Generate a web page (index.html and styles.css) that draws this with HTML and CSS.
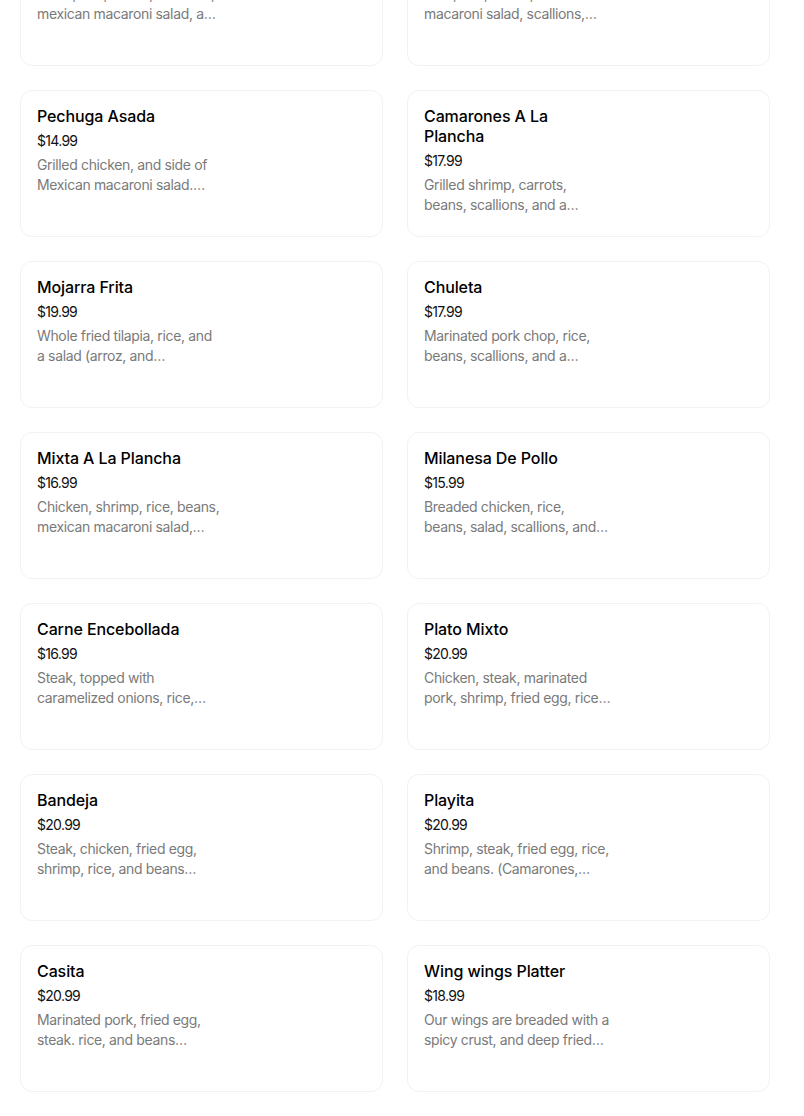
FILE: index.html
```html
<!DOCTYPE html>
<html lang="en">
<head>
<meta charset="utf-8">
<title>Menu</title>
<link rel="stylesheet" href="styles.css">
</head>
<body>
<div class="grid">
  <div class="card"><div class="info">
    <div class="title">Carne Asada</div>
    <div class="price">$16.99</div>
    <div class="desc">Steak, rice, beans, scallions,<br>mexican macaroni salad, a…</div>
  </div></div>
  <div class="card"><div class="info">
    <div class="title">Carnitas</div>
    <div class="price">$16.99</div>
    <div class="desc">Pork, rice, beans, mexican<br>macaroni salad, scallions,…</div>
  </div></div>

  <div class="card"><div class="info">
    <div class="title">Pechuga Asada</div>
    <div class="price">$14.99</div>
    <div class="desc">Grilled chicken, and side of<br>Mexican macaroni salad.…</div>
  </div></div>
  <div class="card"><div class="info">
    <div class="title">Camarones A La<br>Plancha</div>
    <div class="price">$17.99</div>
    <div class="desc">Grilled shrimp, carrots,<br>beans, scallions, and a…</div>
  </div></div>

  <div class="card"><div class="info">
    <div class="title">Mojarra Frita</div>
    <div class="price">$19.99</div>
    <div class="desc">Whole fried tilapia, rice, and<br>a salad (arroz, and…</div>
  </div></div>
  <div class="card"><div class="info">
    <div class="title">Chuleta</div>
    <div class="price">$17.99</div>
    <div class="desc">Marinated pork chop, rice,<br>beans, scallions, and a…</div>
  </div></div>

  <div class="card"><div class="info">
    <div class="title">Mixta A La Plancha</div>
    <div class="price">$16.99</div>
    <div class="desc">Chicken, shrimp, rice, beans,<br>mexican macaroni salad,…</div>
  </div></div>
  <div class="card"><div class="info">
    <div class="title">Milanesa De Pollo</div>
    <div class="price">$15.99</div>
    <div class="desc">Breaded chicken, rice,<br>beans, salad, scallions, and…</div>
  </div></div>

  <div class="card"><div class="info">
    <div class="title">Carne Encebollada</div>
    <div class="price">$16.99</div>
    <div class="desc">Steak, topped with<br>caramelized onions, rice,…</div>
  </div></div>
  <div class="card"><div class="info">
    <div class="title">Plato Mixto</div>
    <div class="price">$20.99</div>
    <div class="desc">Chicken, steak, marinated<br>pork, shrimp, fried egg, rice…</div>
  </div></div>

  <div class="card"><div class="info">
    <div class="title">Bandeja</div>
    <div class="price">$20.99</div>
    <div class="desc">Steak, chicken, fried egg,<br>shrimp, rice, and beans…</div>
  </div></div>
  <div class="card"><div class="info">
    <div class="title">Playita</div>
    <div class="price">$20.99</div>
    <div class="desc">Shrimp, steak, fried egg, rice,<br>and beans. (Camarones,…</div>
  </div></div>

  <div class="card"><div class="info">
    <div class="title">Casita</div>
    <div class="price">$20.99</div>
    <div class="desc">Marinated pork, fried egg,<br>steak. rice, and beans…</div>
  </div></div>
  <div class="card"><div class="info">
    <div class="title">Wing wings Platter</div>
    <div class="price">$18.99</div>
    <div class="desc">Our wings are breaded with a<br>spicy crust, and deep fried…</div>
  </div></div>
</div>
</body>
</html>
```

FILE: styles.css
```css
html, body {
  margin: 0;
  padding: 0;
  background: #ffffff;
}
body {
  font-family: Inter, "Open Sans", "Liberation Sans", sans-serif;
  color: #000000;
  overflow: hidden;
  height: 1116px;
}
.grid {
  display: grid;
  grid-template-columns: 363px 363px;
  column-gap: 24px;
  row-gap: 24px;
  padding-left: 20px;
  margin-top: -81px;
}
.card {
  box-sizing: border-box;
  height: 147px;
  border: 1px solid #f2f2f2;
  border-radius: 12px;
  padding: 15px 16px 0 16px;
  background: #ffffff;
}
.info {
  width: 195px;
  display: flex;
  flex-direction: column;
}
.title {
  font-size: 16px;
  font-weight: 500;
  line-height: 20px;
  letter-spacing: -0.1px;
  color: #000000;
}
.price {
  margin-top: 5px;
  font-size: 14px;
  line-height: 20px;
  letter-spacing: -0.7px;
  color: #111111;
}
.desc {
  margin-top: 4px;
  font-size: 14px;
  line-height: 20px;
  color: #7a7a7a;
  white-space: nowrap;
  letter-spacing: -0.35px;
}
```
